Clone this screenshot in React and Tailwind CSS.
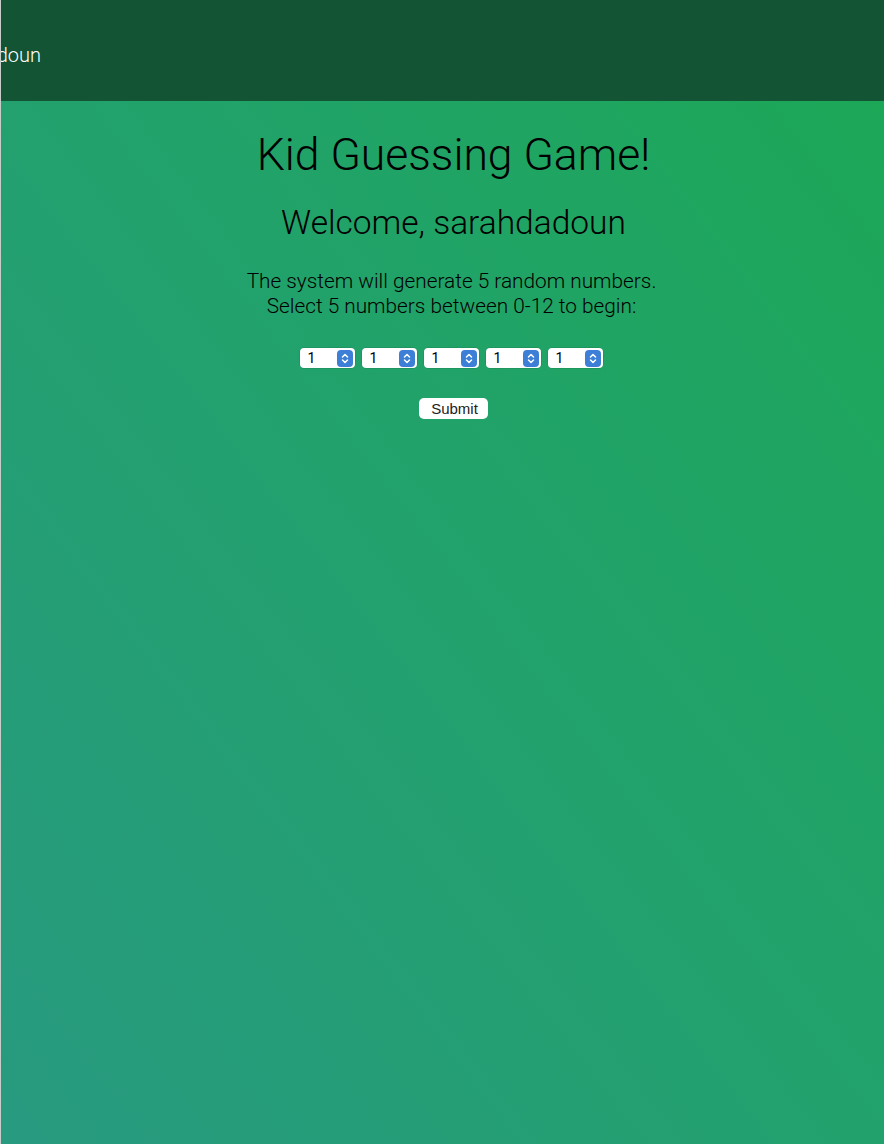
import React from "react";

const Stepper = () => (
    <span className="flex h-[17px] w-[16px] items-center justify-center rounded-[4px] bg-[#3d7fd6]">
        <svg width="8" height="11" viewBox="0 0 8 11" fill="none" stroke="#ffffff" strokeWidth="1.5" strokeLinecap="round" strokeLinejoin="round">
            <path d="M1.5 4L4 1.5L6.5 4" />
            <path d="M1.5 7L4 9.5L6.5 7" />
        </svg>
    </span>
);

const NumberSelect = () => (
    <div className="flex h-[20px] w-[55px] items-center justify-between rounded-[4px] bg-white pl-[8px] pr-[2px] shadow-[0_0_0_0.5px_rgba(0,0,0,0.15)]">
        <span className="text-[14px] leading-none text-black">1</span>
        <Stepper />
    </div>
);

const App = () => {
    return (
        <div
            className="flex min-h-[1144px] flex-col border-l border-[#c9cdca] bg-gradient-to-tr from-[#289a80] to-[#1ca855]"
            style={{ fontFamily: "Roboto, 'Liberation Sans', sans-serif" }}
        >
            {/* Top bar */}
            <header className="flex h-[101px] items-center overflow-hidden bg-[#125434] pt-[9px]">
                <div className="flex w-[40px] justify-end overflow-hidden whitespace-nowrap">
                    <span className="text-[20px] font-light text-white">sarahdadoun</span>
                </div>
            </header>

            {/* Game */}
            <main className="flex flex-col items-center pl-[22px] pt-[28px] text-black">
                <h1 className="text-[44.5px] font-light leading-[52px]">Kid Guessing Game!</h1>
                <h2 className="mt-[22px] text-[33.5px] font-light leading-[40px]">Welcome, sarahdadoun</h2>
                <p className="mt-[26px] pr-[4px] text-center text-[20.8px] font-light leading-[25px]">
                    The system will generate 5 random numbers.
                    <br />
                    Select 5 numbers between 0-12 to begin:
                </p>

                <div className="mt-[29px] flex gap-[7px] pr-[5px]">
                    <NumberSelect />
                    <NumberSelect />
                    <NumberSelect />
                    <NumberSelect />
                    <NumberSelect />
                </div>

                <button
                    type="button"
                    className="mt-[30px] h-[21px] w-[69px] rounded-[5px] bg-white pl-[2px] text-[15px] leading-none text-[#222]"
                    style={{ fontFamily: "'Liberation Sans', Arial, sans-serif" }}
                >
                    Submit
                </button>
            </main>
        </div>
    );
};

export default App;
